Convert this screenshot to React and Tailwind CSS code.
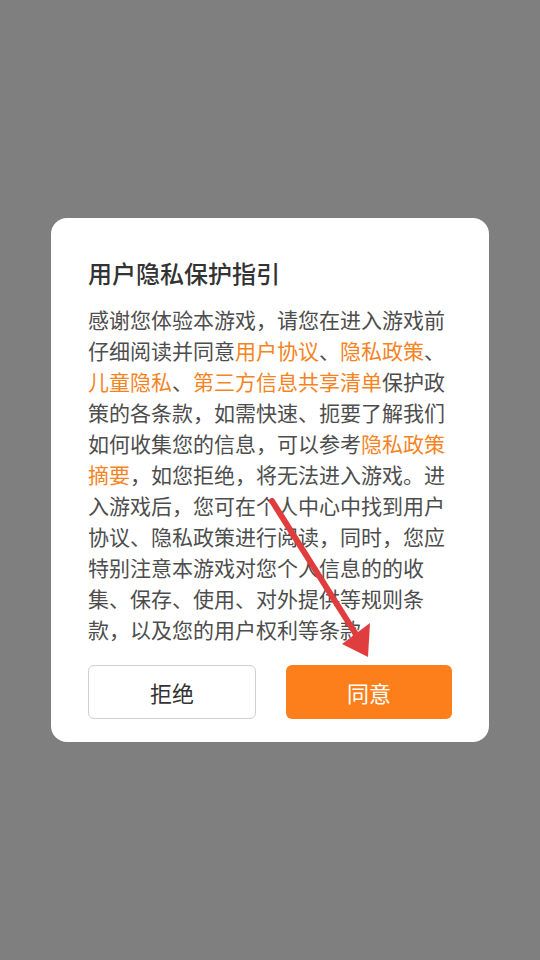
import React from "react";

const font = { fontFamily: '"Noto Sans CJK SC", "Noto Sans", sans-serif' };

const Link = ({ children }) => <span className="text-[#f5841f]">{children}</span>;

const App = () => {
  return (
    <div className="relative h-[960px] w-full bg-[#7f7f7f] flex items-center justify-center" style={font}>
      <div className="w-[438px] bg-white rounded-[16px] pt-[39px] pb-[23px] px-[37px]">
        <h1 className="text-[24px] leading-[32px] font-medium text-[#333333]">用户隐私保护指引</h1>
        <p className="mt-[15px] text-[21px] leading-[31px] text-[#4d4d4d]">
          感谢您体验本游戏，请您在进入游戏前仔细阅读并同意<Link>用户协议</Link>、<Link>隐私政策</Link>、
          <Link>儿童隐私</Link>、<Link>第三方信息共享清单</Link>保护政策的各条款，如需快速、扼要了解我们如何收集您的信息，可以参考
          <Link>隐私政策摘要</Link>，如您拒绝，将无法进入游戏。进入游戏后，您可在个人中心中找到用户协议、隐私政策进行阅读，同时，您应特别注意本游戏对您个人信息的的收集、保存、使用、对外提供等规则条款，以及您的用户权利等条款
        </p>
        <div className="mt-[20px] flex gap-[30px]">
          <button className="flex-1 h-[54px] rounded-[6px] border border-[#cfcfcf] bg-white text-[22px] text-[#333333]">
            拒绝
          </button>
          <button className="flex-1 h-[54px] rounded-[6px] bg-[#fd7f1b] text-[22px] text-white">
            同意
          </button>
        </div>
      </div>

      {/* red pointer arrow over the dialog */}
      <svg className="absolute inset-0 pointer-events-none" width="540" height="960" viewBox="0 0 540 960">
        <line x1="272" y1="501" x2="357" y2="636" stroke="#e03e3e" strokeWidth="6" strokeLinecap="round" />
        <polygon points="342,644 370,623 368,657" fill="#e03e3e" />
      </svg>
    </div>
  );
};

export default App;
